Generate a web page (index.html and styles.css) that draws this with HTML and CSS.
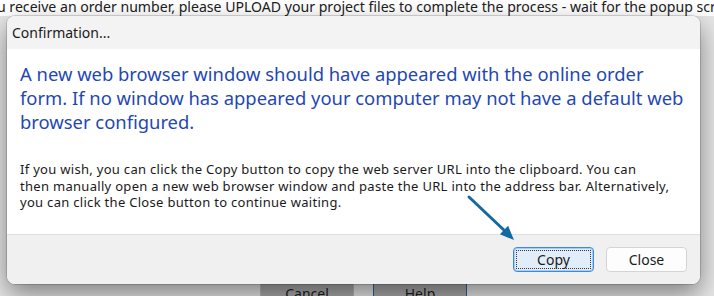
FILE: index.html
```html
<!DOCTYPE html>
<html lang="en">
<head>
    <meta charset="UTF-8">
    <title>Confirmation...</title>
    <link rel="stylesheet" href="styles.css">
</head>
<body>

    <div class="behind-text">u receive an order number, please UPLOAD your project files to complete the process - wait for the popup scr</div>

    <div class="parent">
        <div class="dialog">
            <div class="titlebar">Confirmation...</div>
            <div class="content">
                <p class="instruction">A new web browser window should have appeared with the online order<br>form. If no window has appeared your computer may not have a default web<br>browser configured.</p>
                <p class="details">If you wish, you can click the Copy button to copy the web server URL into the clipboard. You can<br>then manually open a new web browser window and paste the URL into the address bar. Alternatively,<br>you can click the Close button to continue waiting.</p>
            </div>
            <div class="footer">
                <button class="btn focused">Copy</button>
                <button class="btn">Close</button>
            </div>
        </div>

        <div class="parent-buttons">
            <button class="pbtn">Cancel</button>
            <button class="pbtn default">Help</button>
        </div>
    </div>

    <!-- pointer arrow drawn over the dialog -->
    <svg class="arrow" width="60" height="56" viewBox="0 0 60 56">
        <line x1="9" y1="7" x2="46" y2="42" stroke="#1369a0" stroke-width="3" stroke-linecap="round"/>
        <polygon points="54,50 39.9,44.3 48.1,35.7" fill="#1369a0"/>
    </svg>

</body>
</html>
```

FILE: styles.css
```css
body {
    margin: 0;
    width: 714px;
    height: 296px;
    overflow: hidden;
    background-color: #fff;
    font-family: "Noto Sans", "Open Sans", sans-serif;
    position: relative;
}

.behind-text {
    height: 16px;
    line-height: 14px;
    margin-left: -3px;
    font-size: 14.1px;
    color: #202020;
    white-space: nowrap;
    overflow: hidden;
}

.parent {
    background-color: #e6e6e6;
    height: 280px;
    padding-left: 7px;
}

.dialog {
    width: 693px;
    border-radius: 8px;
    overflow: hidden;
    background-color: #fff;
    box-shadow: 0 0 0 1px rgba(0, 0, 0, 0.15), 0 10px 26px rgba(0, 0, 0, 0.45);
    position: relative;
    z-index: 1;
}

.titlebar {
    height: 33px;
    line-height: 33px;
    padding-left: 5px;
    background-color: #f3f3f3;
    font-size: 14px;
    color: #1a1a1a;
}

.content {
    height: 185px;
    padding: 13px 13px 0 13px;
    box-sizing: border-box;
}

.instruction {
    margin: 0;
    font-size: 18.4px;
    line-height: 24px;
    color: #1f48b3;
    white-space: nowrap;
}

.details {
    margin: 27px 0 0 0;
    font-size: 13px;
    letter-spacing: 0.3px;
    line-height: 16.5px;
    color: #1a1a1a;
    white-space: nowrap;
}

.footer {
    height: 50px;
    box-sizing: border-box;
    border-top: 1px solid #e0e0e0;
    background-color: #f0f0f0;
    display: flex;
    justify-content: flex-end;
    align-items: flex-start;
    gap: 12px;
    padding: 12px 13px 0 0;
}

.btn {
    width: 81px;
    height: 25px;
    box-sizing: border-box;
    border: 1px solid #d4d4d4;
    border-radius: 4px;
    background-color: #fdfdfd;
    font-family: "Noto Sans", "Open Sans", sans-serif;
    font-size: 14px;
    color: #1b1b1b;
    padding: 0;
    position: relative;
}

.btn.focused {
    background-color: #e1eefa;
    border: 1px solid #3b8ce0;
    box-shadow: inset 0 0 0 1px #a9cdf2;
}

.btn.focused::after {
    content: "";
    position: absolute;
    top: 2px;
    left: 2px;
    right: 2px;
    bottom: 2px;
    border: 1px dotted #333;
}

.parent-buttons {
    display: flex;
    gap: 19px;
    padding-left: 253px;
}

.pbtn {
    width: 94px;
    height: 26px;
    margin-top: -4px;
    border: 1px solid #b8b8b8;
    border-radius: 4px;
    background-color: #a9a9a9;
    font-family: "Noto Sans", "Open Sans", sans-serif;
    font-size: 14px;
    color: #1b1b1b;
}

.pbtn.default {
    border-color: #2c5f9e;
}

.arrow {
    position: absolute;
    left: 460px;
    top: 190px;
    z-index: 2;
}
```
